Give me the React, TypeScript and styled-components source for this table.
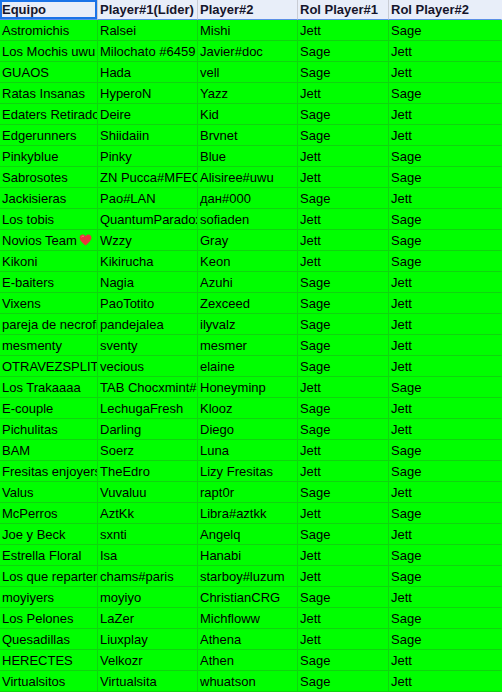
import styled, { createGlobalStyle } from "styled-components";

const GlobalStyle = createGlobalStyle`
  html, body {
    margin: 0;
    padding: 0;
    background: #ffffff;
  }
  body {
    font-family: "Liberation Sans", Arial, sans-serif;
  }
`;

const Sheet = styled.div`
  display: grid;
  grid-template-columns: 98px 100px 100px 91px 113px;
  width: 502px;
  overflow: hidden;
`;

const HeaderCell = styled.div<{ $selected?: boolean; $last?: boolean }>`
  height: 20px;
  box-sizing: border-box;
  padding: 0 2px;
  display: flex;
  align-items: center;
  background: #e8eef9;
  color: #15152b;
  font-size: 13px;
  font-weight: bold;
  white-space: nowrap;
  overflow: hidden;
  border-right: 1px solid ${(p) => (p.$last ? "transparent" : "#c9ccd4")};
  border-bottom: 1px solid #5b8fe6;
  box-shadow: ${(p) => (p.$selected ? "inset 0 0 0 2px #1a73e8" : "none")};
`;

const Cell = styled.div<{ $last?: boolean }>`
  height: 21px;
  box-sizing: border-box;
  padding: 0 2px;
  display: flex;
  align-items: center;
  gap: 2px;
  background: #00ff00;
  color: #000000;
  font-size: 13px;
  white-space: nowrap;
  overflow: hidden;
  border-right: 1px solid ${(p) => (p.$last ? "transparent" : "#0fd40f")};
  border-bottom: 1px solid #0fd40f;
`;

const Heart = () => (
  <svg width="13" height="12" viewBox="0 0 24 22" style={{ flexShrink: 0 }}>
    <path
      d="M12 21 C5 15 1 11.5 1 6.8 C1 3.5 3.6 1 6.8 1 C9 1 10.9 2.2 12 4 C13.1 2.2 15 1 17.2 1 C20.4 1 23 3.5 23 6.8 C23 11.5 19 15 12 21 Z"
      fill="#e8343d"
    />
    <path d="M5 5 C6 3.8 7.5 3.6 8.6 4.2" stroke="#ff8a8a" strokeWidth="1.6" fill="none" strokeLinecap="round" />
  </svg>
);

const headers = ["Equipo", "Player#1(Líder)", "Player#2", "Rol Player#1", "Rol Player#2"];

const rows: string[][] = [
  ["Astromichis", "Ralsei", "Mishi", "Jett", "Sage"],
  ["Los Mochis uwu", "Milochato #6459", "Javier#doc", "Sage", "Jett"],
  ["GUAOS", "Hada", "vell", "Sage", "Jett"],
  ["Ratas Insanas", "HyperoN", "Yazz", "Jett", "Sage"],
  ["Edaters Retirados", "Deire", "Kid", "Sage", "Jett"],
  ["Edgerunners", "Shiidaiin", "Brvnet", "Sage", "Jett"],
  ["Pinkyblue", "Pinky", "Blue", "Jett", "Sage"],
  ["Sabrosotes", "ZN Pucca#MFEG", "Alisiree#uwu", "Jett", "Sage"],
  ["Jackisieras", "Pao#LAN", "дан#000", "Sage", "Jett"],
  ["Los tobis", "QuantumParadox", "sofiaden", "Jett", "Sage"],
  ["Novios Team", "Wzzy", "Gray", "Jett", "Sage"],
  ["Kikoni", "Kikirucha", "Keon", "Jett", "Sage"],
  ["E-baiters", "Nagia", "Azuhi", "Sage", "Jett"],
  ["Vixens", "PaoTotito", "Zexceed", "Sage", "Jett"],
  ["pareja de necrofilicos", "pandejalea", "ilyvalz", "Sage", "Jett"],
  ["mesmenty", "sventy", "mesmer", "Sage", "Jett"],
  ["OTRAVEZSPLIT", "vecious", "elaine", "Sage", "Jett"],
  ["Los Trakaaaa", "TAB Chocxmint#", "Honeyminp", "Jett", "Sage"],
  ["E-couple", "LechugaFresh", "Klooz", "Sage", "Jett"],
  ["Pichulitas", "Darling", "Diego", "Sage", "Jett"],
  ["BAM", "Soerz", "Luna", "Jett", "Sage"],
  ["Fresitas enjoyers", "TheEdro", "Lizy Fresitas", "Jett", "Sage"],
  ["Valus", "Vuvaluu", "rapt0r", "Sage", "Jett"],
  ["McPerros", "AztKk", "Libra#aztkk", "Jett", "Sage"],
  ["Joe y Beck", "sxnti", "Angelq", "Sage", "Jett"],
  ["Estrella Floral", "Isa", "Hanabi", "Jett", "Sage"],
  ["Los que reparten", "chams#paris", "starboy#luzum", "Jett", "Sage"],
  ["moyiyers", "moyiyo", "ChristianCRG", "Sage", "Jett"],
  ["Los Pelones", "LaZer", "Michfloww", "Jett", "Sage"],
  ["Quesadillas", "Liuxplay", "Athena", "Jett", "Sage"],
  ["HERECTES", "Velkozr", "Athen", "Sage", "Jett"],
  ["Virtualsitos", "Virtualsita", "whuatson", "Sage", "Jett"],
];

export default function App() {
  return (
    <>
      <GlobalStyle />
      <Sheet>
        {headers.map((h, i) => (
          <HeaderCell key={h} $selected={i === 0} $last={i === headers.length - 1}>
            {h}
          </HeaderCell>
        ))}
        {rows.map((row, r) =>
          row.map((value, c) => (
            <Cell key={`${r}-${c}`} $last={c === row.length - 1}>
              {value}
              {value === "Novios Team" && <Heart />}
            </Cell>
          ))
        )}
      </Sheet>
    </>
  );
}
